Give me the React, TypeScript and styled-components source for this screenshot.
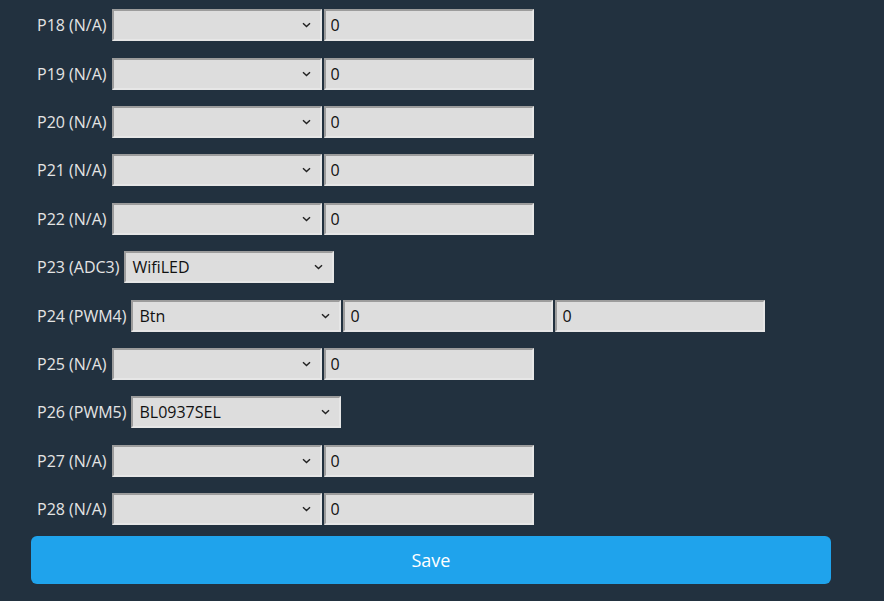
import React from "react";
import styled, { createGlobalStyle } from "styled-components";

const GlobalStyle = createGlobalStyle`
  html, body {
    margin: 0;
    padding: 0;
    background: #22313f;
    height: 100%;
    overflow: hidden;
  }
  body {
    font-family: "Open Sans", "Noto Sans", sans-serif;
  }
`;

const chevron =
  "data:image/svg+xml;utf8," +
  encodeURIComponent(
    '<svg xmlns="http://www.w3.org/2000/svg" width="9" height="6" viewBox="0 0 9 6"><path d="M1 1.2 L4.5 4.6 L8 1.2" fill="none" stroke="#222" stroke-width="1.4"/></svg>'
  );

const Page = styled.div`
  width: 800px;
  padding: 1px 0 0 31px;
`;

const Row = styled.div`
  display: flex;
  align-items: center;
  height: 48.4px;
  padding-left: 6px;
  gap: 2px;
`;

const Label = styled.span`
  color: #e4e4e4;
  font-size: 16px;
  margin-right: 3px;
  white-space: nowrap;
`;

const Field = styled.select`
  box-sizing: border-box;
  appearance: none;
  -webkit-appearance: none;
  width: 210px;
  height: 32px;
  background: #dddddd url("${chevron}") no-repeat right 9px center;
  border-style: solid;
  border-width: 2px;
  border-color: #9c9c9c #e6e6e6 #e6e6e6 #9c9c9c;
  border-radius: 0;
  color: #111;
  font-family: "Open Sans", "Noto Sans", sans-serif;
  font-size: 16px;
  padding: 0 24px 0 6px;
  margin: 0;
  outline: none;
`;

const Value = styled.input`
  box-sizing: border-box;
  width: 210px;
  height: 32px;
  background: #dddddd;
  border-style: solid;
  border-width: 2px;
  border-color: #9c9c9c #e6e6e6 #e6e6e6 #9c9c9c;
  color: #111;
  font-family: "Open Sans", "Noto Sans", sans-serif;
  font-size: 16px;
  padding: 0 5px;
  margin: 0;
  outline: none;
`;

const SaveButton = styled.button`
  display: block;
  width: 800px;
  height: 48px;
  margin-top: 2.6px;
  border: 0;
  border-radius: 6px;
  background: #1fa3ec;
  color: #ffffff;
  font-family: "Open Sans", "Noto Sans", sans-serif;
  font-size: 18px;
  cursor: pointer;
`;

type Pin = { name: string; role: string; inputs: number };

const pins: Pin[] = [
  { name: "P18 (N/A)", role: "", inputs: 1 },
  { name: "P19 (N/A)", role: "", inputs: 1 },
  { name: "P20 (N/A)", role: "", inputs: 1 },
  { name: "P21 (N/A)", role: "", inputs: 1 },
  { name: "P22 (N/A)", role: "", inputs: 1 },
  { name: "P23 (ADC3)", role: "WifiLED", inputs: 0 },
  { name: "P24 (PWM4)", role: "Btn", inputs: 2 },
  { name: "P25 (N/A)", role: "", inputs: 1 },
  { name: "P26 (PWM5)", role: "BL0937SEL", inputs: 0 },
  { name: "P27 (N/A)", role: "", inputs: 1 },
  { name: "P28 (N/A)", role: "", inputs: 1 },
];

const roles = ["", "WifiLED", "Btn", "BL0937SEL", "Relay", "LED"];

export default function App() {
  return (
    <>
      <GlobalStyle />
      <Page>
        {pins.map((p) => (
          <Row key={p.name}>
            <Label>{p.name}</Label>
            <Field defaultValue={p.role}>
              {roles.map((r) => (
                <option key={r} value={r}>
                  {r}
                </option>
              ))}
            </Field>
            {Array.from({ length: p.inputs }).map((_, i) => (
              <Value key={i} defaultValue="0" />
            ))}
          </Row>
        ))}
        <SaveButton>Save</SaveButton>
      </Page>
    </>
  );
}
